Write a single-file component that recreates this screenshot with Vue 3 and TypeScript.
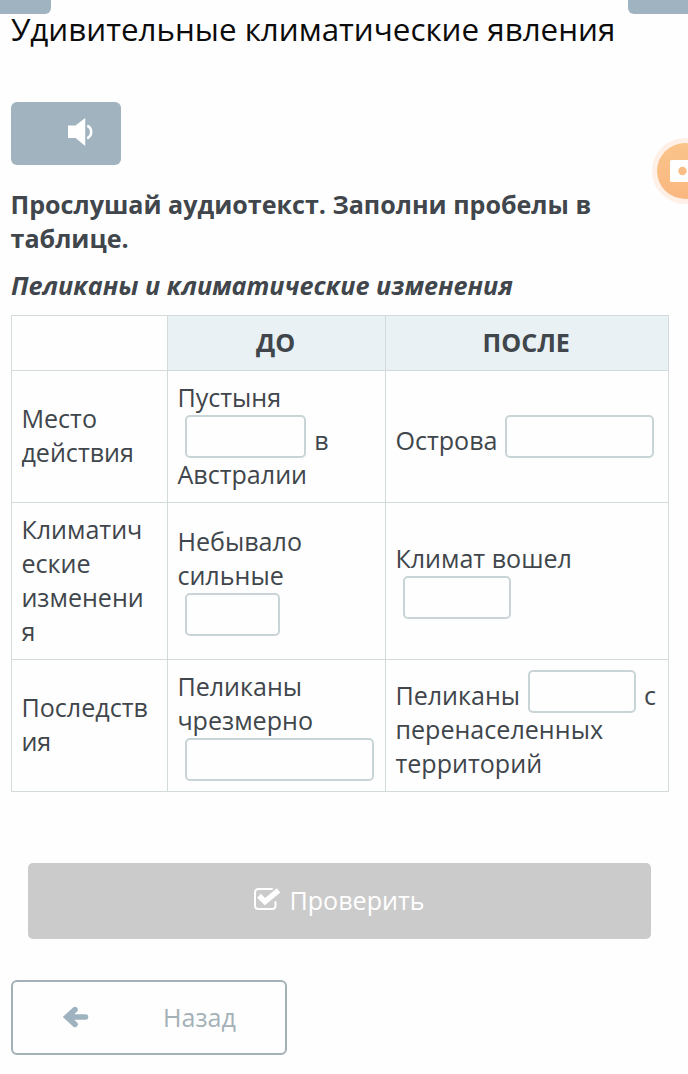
<script setup lang="ts">
type Part = string | number

interface Cell {
  head?: boolean
  lines: Part[][]
}

// Strings are text, numbers are the widths of answer fields.
const cells: Cell[] = [
  { lines: [] },
  { head: true, lines: [['ДО']] },
  { head: true, lines: [['ПОСЛЕ']] },
  { lines: [['Место'], ['действия']] },
  { lines: [['Пустыня'], [121, 'в'], ['Австралии']] },
  { lines: [['Острова', 149]] },
  { lines: [['Климатич'], ['еские'], ['изменени'], ['я']] },
  { lines: [['Небывало'], ['сильные'], [95]] },
  { lines: [['Климат вошел'], [108]] },
  { lines: [['Последств'], ['ия']] },
  { lines: [['Пеликаны'], ['чрезмерно'], [189]] },
  { lines: [['Пеликаны', 108, 'с'], ['перенаселенных'], ['территорий']] },
]
</script>

<template>
  <main class="page">
    <div class="tab tab-left"></div>
    <div class="tab tab-right"></div>
    <h1 class="title">Удивительные климатические явления</h1>

    <button class="audio" aria-label="Прослушать">
      <svg width="26" height="30" viewBox="0 0 26 30">
        <path d="M0 8.600h7.500L17.200 1v28L7.500 20.900H0z" fill="#fff" />
        <path d="M19.200 8.800q4 1.800 4 6.200t-4 6.200" fill="none" stroke="#fff" stroke-width="2.600" />
      </svg>
    </button>

    <p class="task">Прослушай аудиотекст. Заполни пробелы в<br />таблице.</p>
    <p class="subtitle">Пеликаны и климатические изменения</p>

    <section class="table">
      <div v-for="(cell, i) in cells" :key="i" class="cell" :class="{ head: cell.head }">
        <div v-for="(line, j) in cell.lines" :key="j" class="line">
          <template v-for="(part, k) in line" :key="k">
            <input v-if="typeof part === 'number'" class="field" type="text" :style="{ width: part + 'px' }" />
            <span v-else>{{ part }}</span>
          </template>
        </div>
      </div>
    </section>

    <button class="check">
      <svg width="28" height="24" viewBox="0 0 28 24">
        <path d="M19 2H5.500Q2 2 2 5.500v13Q2 22 5.500 22h13.500Q22.500 22 22.500 18.500V15" fill="none" stroke="#fff" stroke-width="2" stroke-linecap="round" />
        <path d="M6 8.800l6 5.800L25.600 3.400" fill="none" stroke="#fff" stroke-width="5.400" />
      </svg>
      <span>Проверить</span>
    </button>

    <button class="back">
      <svg width="26" height="22" viewBox="0 0 26 22">
        <path d="M12 3.600L3.800 11l8.200 7.400M4 11h18.500" fill="none" stroke="#9eb3bf" stroke-width="5.600" stroke-linecap="round" stroke-linejoin="miter" />
        <path d="M4 11l7.500-5v10z" fill="#9eb3bf" />
      </svg>
      <span>Назад</span>
    </button>

    <div class="capture">
      <svg width="31" height="22" viewBox="0 0 31 22">
        <rect width="31" height="22" rx="1.500" fill="#fff" />
        <circle cx="12.500" cy="11" r="4.200" fill="#fabd84" />
      </svg>
    </div>
  </main>
</template>

<style>
body {
  margin: 0;
  background: #fefefe;
}
</style>

<style scoped>
.page {
  position: relative;
  box-sizing: border-box;
  width: 688px;
  height: 1074px;
  padding: 8px 19px 0 11px;
  overflow: hidden;
  background: #fefefe;
  color: #40464b;
  font: 25.1px/34px 'Open Sans', 'Noto Sans', sans-serif;
}
.tab {
  position: absolute;
  top: 0;
  height: 14px;
  background: #9fb3c0;
}
.tab-left {
  left: 0;
  width: 51px;
  border-radius: 0 0 6px 0;
}
.tab-right {
  right: 0;
  width: 60px;
  border-radius: 0 0 0 6px;
}
.title {
  margin: 0;
  color: #0b0b0b;
  font-size: 31.35px;
  font-weight: 400;
  line-height: 42px;
  white-space: nowrap;
}
button {
  display: flex;
  align-items: center;
  box-sizing: border-box;
  border: 0;
  font: inherit;
}
.audio {
  width: 110px;
  height: 63px;
  margin-top: 52px;
  padding: 0 0 3px 57px;
  border-radius: 6px;
  background: #a0b3be;
}
.task {
  margin: 22px 0 0 -0.5px;
  font-weight: 700;
  white-space: nowrap;
}
.subtitle {
  margin: 13px 0 13px;
  font-size: 25.2px;
  font-weight: 700;
  font-style: italic;
  white-space: nowrap;
}
.table {
  display: grid;
  grid-template-columns: 155px 217px 282px;
  grid-template-rows: 54px 131px 156px 131px;
  gap: 1px;
  box-sizing: border-box;
  width: 658px;
  padding: 1px;
  background: #d3dadc;
}
.cell {
  display: flex;
  flex-direction: column;
  justify-content: center;
  padding: 0 10px 0.9px 9.4px;
  background: #fefefe;
  white-space: nowrap;
}
.head {
  align-items: center;
  padding-right: 11px;
  background: #e9f1f4;
  font-weight: 700;
}
.line {
  display: flex;
  align-items: flex-end;
}
.line span {
  margin: -1px 0 1px;
}
.field {
  flex: none;
  box-sizing: border-box;
  height: 43px;
  margin: 0 8px 0 7.8px;
  padding: 0;
  border: 2px solid #c9d4d6;
  border-radius: 5px;
  background: #fefefe;
}
.check {
  justify-content: center;
  gap: 8px;
  width: 623px;
  height: 76px;
  margin: 71px 0 0 17px;
  padding: 0 1px 2px 0;
  border-radius: 5px;
  background: #cbcbcb;
  color: #fff;
}
.check svg {
  margin-bottom: 2px;
}
.back {
  gap: 74px;
  width: 276px;
  height: 75px;
  margin-top: 41px;
  padding: 0 0 2px 50px;
  border: 2px solid #a2b0b7;
  border-radius: 6px;
  background: #fefefe;
  color: #a4b1b7;
}
.capture {
  position: absolute;
  top: 143px;
  left: 657px;
  display: flex;
  align-items: center;
  box-sizing: border-box;
  width: 56px;
  height: 56px;
  padding-left: 13px;
  border-radius: 50%;
  background: linear-gradient(#fac48a, #fab780);
  box-shadow: 0 0 0 5px #fef0e6;
}
</style>
